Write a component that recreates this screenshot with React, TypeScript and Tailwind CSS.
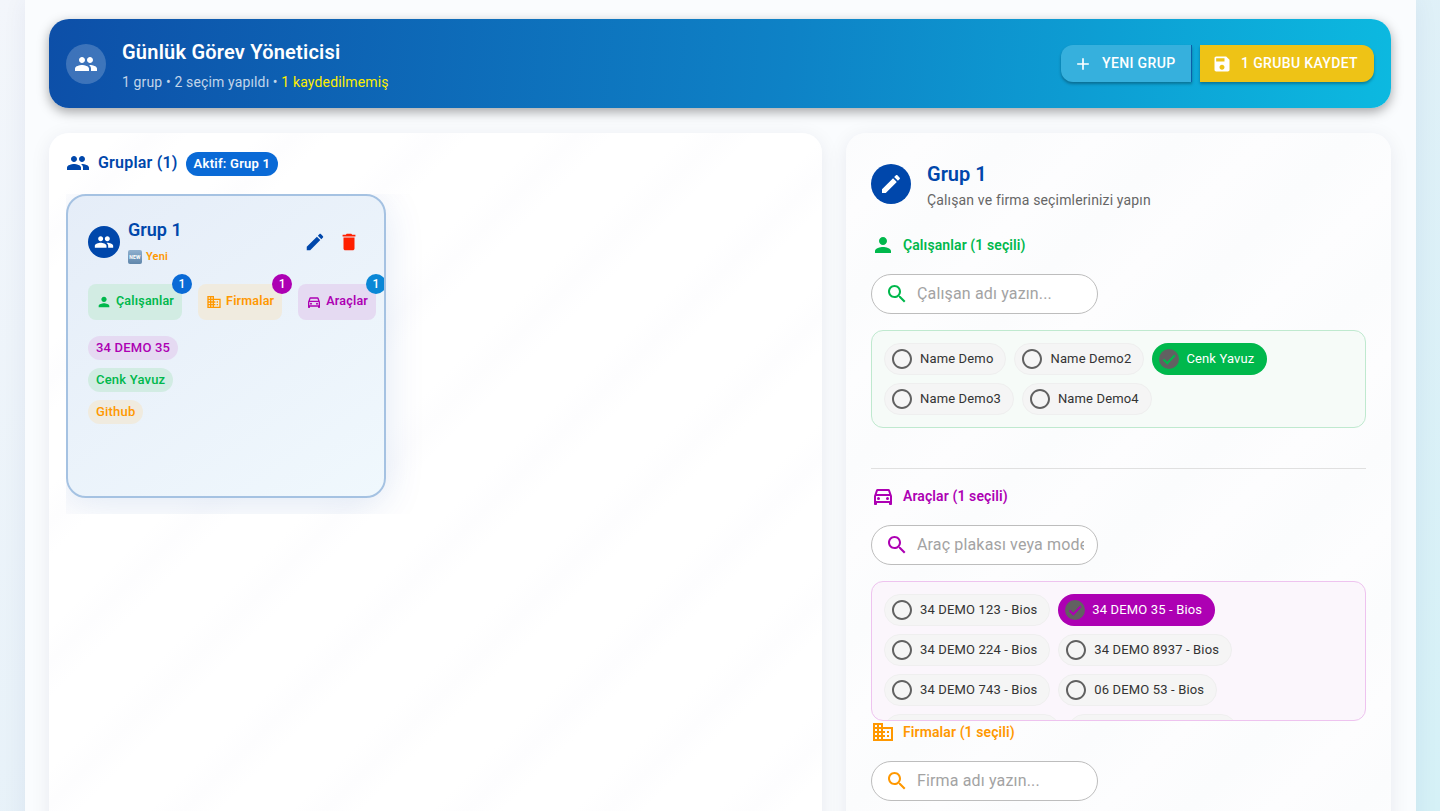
import type { ReactNode } from "react";

const GROUP =
  "M16 11c1.66 0 2.99-1.34 2.99-3S17.66 5 16 5c-1.66 0-3 1.34-3 3s1.34 3 3 3zm-8 0c1.66 0 2.99-1.34 2.99-3S9.66 5 8 5C6.34 5 5 6.34 5 8s1.34 3 3 3zm0 2c-2.33 0-7 1.17-7 3.5V19h14v-2.5c0-2.33-4.67-3.5-7-3.5zm8 0c-.29 0-.62.02-.97.05 1.16.84 1.97 1.97 1.97 3.45V19h6v-2.5c0-2.33-4.67-3.5-7-3.5z";
const EDIT =
  "M3 17.25V21h3.75L17.81 9.94l-3.75-3.75L3 17.25zM20.71 7.04c.39-.39.39-1.02 0-1.41l-2.34-2.34c-.39-.39-1.02-.39-1.41 0l-1.83 1.83 3.75 3.75 1.83-1.83z";
const TRASH = "M6 19c0 1.1.9 2 2 2h8c1.1 0 2-.9 2-2V7H6v12zM19 4h-3.5l-1-1h-5l-1 1H5v2h14V4z";
const PERSON = "M12 12c2.21 0 4-1.79 4-4s-1.79-4-4-4-4 1.79-4 4 1.79 4 4 4zm0 2c-2.67 0-8 1.34-8 4v2h16v-2c0-2.66-5.33-4-8-4z";
const SEARCH =
  "M15.5 14h-.79l-.28-.27C15.41 12.59 16 11.11 16 9.5 16 5.91 13.09 3 9.5 3S3 5.91 3 9.5 5.91 16 9.5 16c1.61 0 3.09-.59 4.23-1.57l.27.28v.79l5 4.99L20.49 19l-4.99-5zm-6 0C7.01 14 5 11.99 5 9.5S7.01 5 9.5 5 14 7.01 14 9.5 11.99 14 9.5 14z";
const SAVE =
  "M17 3H5c-1.11 0-2 .9-2 2v14c0 1.1.89 2 2 2h14c1.1 0 2-.9 2-2V7l-4-4zm-5 16c-1.66 0-3-1.34-3-3s1.34-3 3-3 3 1.34 3 3-1.34 3-3 3zm3-10H5V5h10v4z";
const ADD = "M19 13h-6v6h-2v-6H5v-2h6V5h2v6h6v2z";
const CAR =
  "M18.92 6.01C18.72 5.42 18.16 5 17.5 5h-11c-.66 0-1.21.42-1.42 1.01L3 12v8c0 .55.45 1 1 1h1c.55 0 1-.45 1-1v-1h12v1c0 .55.45 1 1 1h1c.55 0 1-.45 1-1v-8l-2.08-5.99zM6.85 7h10.29l1.08 3.11H5.77L6.85 7zM19 17H5v-5h14v5zM7.5 13a1.5 1.5 0 1 0 0 3 1.5 1.5 0 0 0 0-3zm9 0a1.5 1.5 0 1 0 0 3 1.5 1.5 0 0 0 0-3z";
const DOMAIN =
  "M12 7V3H2v18h20V7H12zM6 19H4v-2h2v2zm0-4H4v-2h2v2zm0-4H4V9h2v2zm0-4H4V5h2v2zm4 12H8v-2h2v2zm0-4H8v-2h2v2zm0-4H8V9h2v2zm0-4H8V5h2v2zm10 12h-8v-2h2v-2h-2v-2h2v-2h-2V9h8v10zm-2-8h-2v2h2v-2zm0 4h-2v2h2v-2z";
const RADIO =
  "M12 2C6.48 2 2 6.48 2 12s4.48 10 10 10 10-4.48 10-10S17.52 2 12 2zm0 18c-4.42 0-8-3.58-8-8s3.58-8 8-8 8 3.58 8 8-3.58 8-8 8z";

function Icon({ d, className }: { d: string; className: string }) {
  return (
    <svg viewBox="0 0 24 24" fill="currentColor" className={className}>
      <path d={d} />
    </svg>
  );
}

function Chip({ label, selected, bg, tick }: { label: string; selected?: boolean; bg?: string; tick?: string }) {
  if (selected) {
    return (
      <div className={`flex h-8 items-center rounded-2xl pl-[5px] pr-[13px] text-[13px] text-white ${bg}`}>
        <svg viewBox="0 0 24 24" className="h-6 w-6 shrink-0">
          <circle cx="12" cy="12" r="10" fill="#616161" />
          <path d="M6.5 12.5l3.8 3.8 7.5-8" fill="none" stroke={tick} strokeWidth="2" />
        </svg>
        <span className="ml-[5px] tracking-[0.15px]">{label}</span>
      </div>
    );
  }
  return (
    <div className="flex h-8 items-center rounded-2xl border border-[#efefef] bg-[#f5f5f5] pl-[5px] pr-3 text-[13px] text-[#333333]">
      <Icon d={RADIO} className="h-6 w-6 shrink-0 text-[#616161]" />
      <span className="ml-[6px] tracking-[0.15px]">{label}</span>
    </div>
  );
}

function SearchBox({ placeholder, color }: { placeholder: string; color: string }) {
  return (
    <div className="flex h-10 w-[227px] items-center rounded-[20px] border border-[#bdbdbd] bg-white pl-[13px] pr-[13px]">
      <Icon d={SEARCH} className={`h-6 w-6 shrink-0 ${color}`} />
      <input
        readOnly
        placeholder={placeholder}
        className="ml-2 w-full min-w-0 bg-transparent text-[16px] tracking-[0.15px] outline-none placeholder:text-[#a3a3a3]"
      />
    </div>
  );
}

function SectionTitle({ icon, color, children }: { icon: string; color: string; children: ReactNode }) {
  return (
    <div className={`flex h-6 items-center gap-2 text-[14px] font-semibold tracking-[0.1px] ${color}`}>
      <Icon d={icon} className="h-6 w-6" />
      <span>{children}</span>
    </div>
  );
}

function Tab({ icon, label, cls, badge }: { icon: string; label: string; cls: string; badge: string }) {
  return (
    <div className={`relative flex h-9 items-center gap-1 rounded-lg px-2 text-[12.5px] font-semibold tracking-[0.2px] ${cls}`}>
      <Icon d={icon} className="h-4 w-4" />
      <span className="pb-px">{label}</span>
      <span className={`absolute -right-[10px] -top-[10px] flex h-5 w-5 items-center justify-center rounded-full text-[12px] font-medium text-white ${badge}`}>1</span>
    </div>
  );
}

export default function App() {
  return (
    <div
      className="h-screen overflow-hidden bg-[linear-gradient(135deg,#f3f6fb_0%,#e3f0f8_50%,#d5f1f7_100%)] px-[25px]"
      style={{ fontFamily: "Roboto, 'Noto Sans', sans-serif" }}
    >
      <div className="h-[1200px] w-[1391px] bg-[#fafcfe] pl-[24px] pr-[25px] pt-[19px] shadow-[0_0_24px_rgba(0,40,100,0.06)]">
        <header className="flex h-[89px] items-center justify-between rounded-[20px] bg-[linear-gradient(95deg,#0d4fa8_0%,#0e82c6_55%,#0cb9e0_100%)] pl-[17px] pr-[17px] shadow-[0_4px_12px_rgba(0,0,0,0.35)]">
          <div className="flex items-center gap-4">
            <div className="flex h-10 w-10 items-center justify-center rounded-full bg-white/20 text-white">
              <Icon d={GROUP} className="h-6 w-6" />
            </div>
            <div className="pt-[2px]">
              <h1 className="text-[20px] leading-[28px] font-semibold tracking-[0.22px] text-white">Günlük Görev Yöneticisi</h1>
              <p className="mt-[6px] text-[14px] leading-5 tracking-[0.14px] text-white/75">
                1 grup • 2 seçim yapıldı • <span className="text-[#ffee00]">1 kaydedilmemiş</span>
              </p>
            </div>
          </div>
          <div className="flex">
            <button className="flex h-[37px] w-[131px] items-center gap-[9px] rounded-l-xl border-r border-[#0c5ea8] bg-[#36b0dd] pl-3 text-[14px] font-medium tracking-[0.35px] text-white shadow-[0_2px_3px_rgba(0,0,0,0.3)]">
              <Icon d={ADD} className="h-5 w-5" />
              YENI GRUP
            </button>
            <button className="ml-[8px] flex h-[37px] w-[174px] items-center gap-[9px] rounded-r-xl bg-[#eec316] pl-3 text-[14px] font-medium tracking-[0.35px] text-white shadow-[0_2px_3px_rgba(0,0,0,0.3)]">
              <Icon d={SAVE} className="h-5 w-5" />
              1 GRUBU KAYDET
            </button>
          </div>
        </header>

        <div className="mt-[25px] flex gap-[24px]">
          <section className="h-[900px] w-[773px] rounded-[20px] bg-[repeating-linear-gradient(135deg,#ffffff_0px,#ffffff_50px,#fdfdfe_75px,#ffffff_100px)] px-[17px] pt-[18px] shadow-[0_4px_20px_rgba(0,30,70,0.08)]">
            <div className="flex h-6 items-center gap-2 text-[#0047ab]">
              <Icon d={GROUP} className="h-6 w-6" />
              <span className="text-[16px] font-semibold tracking-[0.2px]">Gruplar (1)</span>
              <span className="mt-[2px] rounded-xl bg-[#0a6ad6] px-2 py-1 text-[13px] leading-4 font-semibold tracking-[0.25px] text-white">Aktif: Grup 1</span>
            </div>
            <div className="mt-[19px] h-[320px] overflow-hidden">
              <div className="relative h-[304px] w-[320px] overflow-hidden rounded-[20px] border-2 border-[#a5c2e2] bg-[linear-gradient(145deg,#e5edf8_0%,#f0f8fd_100%)] px-5 pt-[30px] shadow-[0_8px_40px_rgba(0,71,171,0.12)]">
                <div className="flex items-start">
                  <div className="flex h-8 w-8 items-center justify-center rounded-full bg-[#0047ab] text-white">
                    <Icon d={GROUP} className="h-5 w-5" />
                  </div>
                  <div className="-mt-2 ml-2">
                    <div className="text-[18px] leading-6 font-semibold text-[#0047ab]">Grup 1</div>
                    <div className="mt-2 flex items-center gap-1 text-[11px] leading-[14px] font-semibold tracking-[0.2px] text-[#ff9800]">
                      <span className="flex h-[14px] w-[14px] items-center justify-center rounded-[2px] bg-[linear-gradient(180deg,#8fb0cf,#5f86ab)] text-[5px] font-bold text-white">NEW</span>
                      Yeni
                    </div>
                  </div>
                  <div className="ml-auto mr-1 mt-[5px] flex gap-3">
                    <Icon d={EDIT} className="h-[22px] w-[22px] text-[#0047ab]" />
                    <Icon d={TRASH} className="h-[22px] w-[22px] text-[#ff1f00]" />
                  </div>
                </div>
                <div className="mt-5 flex gap-4">
                  <Tab icon={PERSON} label="Çalışanlar" cls="bg-[#d2ece3] text-[#00b84c]" badge="bg-[#0a6ad6]" />
                  <Tab icon={DOMAIN} label="Firmalar" cls="bg-[#f0ebdf] text-[#ff9800]" badge="bg-[#ad00b3]" />
                  <Tab icon={CAR} label="Araçlar" cls="bg-[#e5daf2] text-[#ad00b3]" badge="bg-[#0a87d6]" />
                </div>
                <div className="mt-4 flex flex-col items-start gap-2 text-[13px] leading-6 font-medium tracking-[0.2px]">
                  <span className="rounded-xl bg-[#e5daf2] px-2 text-[#ad00b3]">34 DEMO 35</span>
                  <span className="rounded-xl bg-[#d2ece3] px-2 text-[#00b84c]">Cenk Yavuz</span>
                  <span className="rounded-xl bg-[#f0ebdf] px-2 text-[#ff9800]">Github</span>
                </div>
              </div>
            </div>
          </section>

          <section className="h-[900px] w-[545px] rounded-[20px] bg-[repeating-linear-gradient(135deg,#fbfcfd_0px,#fdfdfe_60px,#fbfcfd_120px)] px-[25px] pt-[31px] shadow-[0_4px_20px_rgba(0,30,70,0.08)]">
            <div className="flex items-start gap-4">
              <div className="flex h-10 w-10 items-center justify-center rounded-full bg-[#0047ab] text-white">
                <Icon d={EDIT} className="h-6 w-6" />
              </div>
              <div>
                <h2 className="text-[20px] leading-5 font-semibold text-[#0047ab]">Grup 1</h2>
                <p className="mt-2 text-[14px] leading-4 tracking-[0.15px] text-[#666666]">Çalışan ve firma seçimlerinizi yapın</p>
              </div>
            </div>

            <div className="mt-[25px]">
              <SectionTitle icon={PERSON} color="text-[#00b84c]">Çalışanlar (1 seçili)</SectionTitle>
            </div>
            <div className="mt-[17px]">
              <SearchBox placeholder="Çalışan adı yazın..." color="text-[#00b84c]" />
            </div>
            <div className="mt-4 flex h-[98px] flex-wrap content-start gap-2 rounded-xl border border-[#bfe9cf] bg-[#f6fbf8] p-3">
              <Chip label="Name Demo" />
              <Chip label="Name Demo2" />
              <Chip label="Cenk Yavuz" selected bg="bg-[#00b84c]" tick="#00b84c" />
              <Chip label="Name Demo3" />
              <Chip label="Name Demo4" />
            </div>

            <div className="mt-10 h-px bg-[#e0e0e0]" />

            <div className="mt-[15px]">
              <SectionTitle icon={CAR} color="text-[#ad00b3]">Araçlar (1 seçili)</SectionTitle>
            </div>
            <div className="mt-[17px]">
              <SearchBox placeholder="Araç plakası veya modeli yazın..." color="text-[#ad00b3]" />
            </div>
            <div className="mt-4 flex h-[140px] flex-col gap-2 overflow-hidden rounded-xl border border-[#eec3ef] bg-[#fbf6fc] p-3">
              <div className="flex gap-2">
                <Chip label="34 DEMO 123 - Bios" />
                <Chip label="34 DEMO 35 - Bios" selected bg="bg-[#ad00b3]" tick="#ad00b3" />
              </div>
              <div className="flex gap-2">
                <Chip label="34 DEMO 224 - Bios" />
                <Chip label="34 DEMO 8937 - Bios" />
              </div>
              <div className="flex gap-2">
                <Chip label="34 DEMO 743 - Bios" />
                <Chip label="06 DEMO 53 - Bios" />
              </div>
              <div className="flex shrink-0 gap-2">
                <div className="h-8 w-[176px] shrink-0 rounded-2xl border border-[#efefef] bg-[#f5f5f5]" />
                <div className="h-8 w-[169px] shrink-0 rounded-2xl border border-[#efefef] bg-[#f5f5f5]" />
              </div>
            </div>

            <div className="-mt-px">
              <SectionTitle icon={DOMAIN} color="text-[#ff9800]">Firmalar (1 seçili)</SectionTitle>
            </div>
            <div className="mt-[17px]">
              <SearchBox placeholder="Firma adı yazın..." color="text-[#ff9800]" />
            </div>
          </section>
        </div>
      </div>
    </div>
  );
}
